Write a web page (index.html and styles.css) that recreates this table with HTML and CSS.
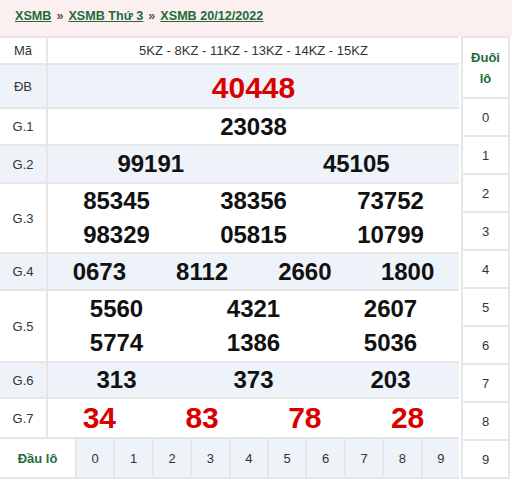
FILE: index.html
```html
<!DOCTYPE html>
<html lang="vi">
<head>
<meta charset="utf-8">
<title>XSMB 20/12/2022</title>
<link rel="stylesheet" href="styles.css">
</head>
<body>
<div class="crumb">
  <a href="#">XSMB</a><span class="sep">»</span><a href="#">XSMB Thứ 3</a><span class="sep">»</span><a href="#">XSMB 20/12/2022</a>
</div>
<div class="board">
  <div class="main">
    <div class="row h-ma"><div class="lbl">Mã</div><div class="cnt code">5KZ - 8KZ - 11KZ - 13KZ - 14KZ - 15KZ</div></div>
    <div class="row h-db alt"><div class="lbl">ĐB</div><div class="cnt c1 low"><span class="num red big">40448</span></div></div>
    <div class="row h-g1"><div class="lbl">G.1</div><div class="cnt c1"><span class="num">23038</span></div></div>
    <div class="row h-g2 alt"><div class="lbl">G.2</div><div class="cnt c2"><span class="num">99191</span><span class="num">45105</span></div></div>
    <div class="row h-g3"><div class="lbl">G.3</div><div class="cnt c3 two"><span class="num">85345</span><span class="num">38356</span><span class="num">73752</span><span class="num">98329</span><span class="num">05815</span><span class="num">10799</span></div></div>
    <div class="row h-g4 alt"><div class="lbl">G.4</div><div class="cnt c4"><span class="num">0673</span><span class="num">8112</span><span class="num">2660</span><span class="num">1800</span></div></div>
    <div class="row h-g5"><div class="lbl">G.5</div><div class="cnt c3 two"><span class="num">5560</span><span class="num">4321</span><span class="num">2607</span><span class="num">5774</span><span class="num">1386</span><span class="num">5036</span></div></div>
    <div class="row h-g6 alt"><div class="lbl">G.6</div><div class="cnt c3"><span class="num">313</span><span class="num">373</span><span class="num">203</span></div></div>
    <div class="row h-g7"><div class="lbl">G.7</div><div class="cnt c4"><span class="num red big">34</span><span class="num red big">83</span><span class="num red big">78</span><span class="num red big">28</span></div></div>
    <div class="dau">
      <div class="dau-lbl">Đầu lô</div>
      <div class="d">0</div><div class="d">1</div><div class="d">2</div><div class="d">3</div><div class="d">4</div>
      <div class="d">5</div><div class="d">6</div><div class="d">7</div><div class="d">8</div><div class="d">9</div>
    </div>
  </div>
  <div class="side">
    <div class="side-head">Đuôi<br>lô</div>
    <div class="s">0</div><div class="s">1</div><div class="s">2</div><div class="s">3</div><div class="s">4</div>
    <div class="s">5</div><div class="s">6</div><div class="s">7</div><div class="s">8</div><div class="s">9</div>
  </div>
</div>
</body>
</html>
```
FILE: styles.css
```css
* { box-sizing: border-box; }
body {
  margin: 0;
  font-family: "Liberation Sans", Arial, sans-serif;
  font-size: 13px;
  color: #333;
  background: #fff;
}
.crumb {
  height: 36px;
  line-height: 33px;
  padding-left: 15px;
  background: #fcefef;
  font-size: 12.6px;
}
.crumb a {
  color: #236b3b;
  font-weight: bold;
  text-decoration: underline;
}
.crumb .sep {
  color: #555;
  font-weight: bold;
  margin: 0 5px;
}
.board {
  display: flex;
  gap: 2px;
  align-items: flex-start;
}
.main {
  width: 459px;
  display: flex;
  flex-direction: column;
  gap: 2px;
  padding: 2px 0;
  background: #e6e6e6;
}
.row {
  display: grid;
  grid-template-columns: 46px 1fr;
  gap: 2px;
}
.lbl, .cnt {
  background: #fff;
  display: flex;
  align-items: center;
  justify-content: center;
}
.alt .lbl, .alt .cnt { background: #eef2f9; }
.lbl { color: #333; }
.cnt.low { padding-top: 4px; }
.h-ma { height: 25px; }
.h-db { height: 42px; }
.h-g1 { height: 35px; }
.h-g2 { height: 36px; }
.h-g3 { height: 68px; }
.h-g4 { height: 35px; }
.h-g5 { height: 70px; }
.h-g6 { height: 34px; }
.h-g7 { height: 38px; }
.code { color: #333; }
.cnt.c2, .cnt.c3, .cnt.c4 { display: grid; align-items: center; justify-items: center; }
.c2 { grid-template-columns: repeat(2, 1fr); }
.c3 { grid-template-columns: repeat(3, 1fr); }
.c4 { grid-template-columns: repeat(4, 1fr); }
.two { grid-template-rows: 34px 34px; align-content: center; }
.num {
  font-weight: bold;
  font-size: 24px;
  color: #111;
  line-height: 30px;
}
.num.big { font-size: 30px; }
.num.red { color: #d90000; }
.dau {
  height: 38px;
  display: grid;
  grid-template-columns: 75px repeat(10, 1fr);
  gap: 2px;
}
.dau-lbl, .d {
  display: flex;
  align-items: center;
  justify-content: center;
}
.dau-lbl {
  background: #fff;
  color: #236b3b;
  font-weight: bold;
}
.d { background: #eef2f9; color: #333; }
.side {
  width: 49px;
  display: flex;
  flex-direction: column;
  gap: 2px;
  padding: 2px;
  background: #e6e6e6;
}
.side-head {
  height: 59px;
  background: #fff;
  color: #236b3b;
  font-weight: bold;
  text-align: center;
  line-height: 21px;
  display: flex;
  align-items: center;
  justify-content: center;
}
.s {
  height: 36px;
  background: #fff;
  color: #333;
  display: flex;
  align-items: center;
  justify-content: center;
}
```
